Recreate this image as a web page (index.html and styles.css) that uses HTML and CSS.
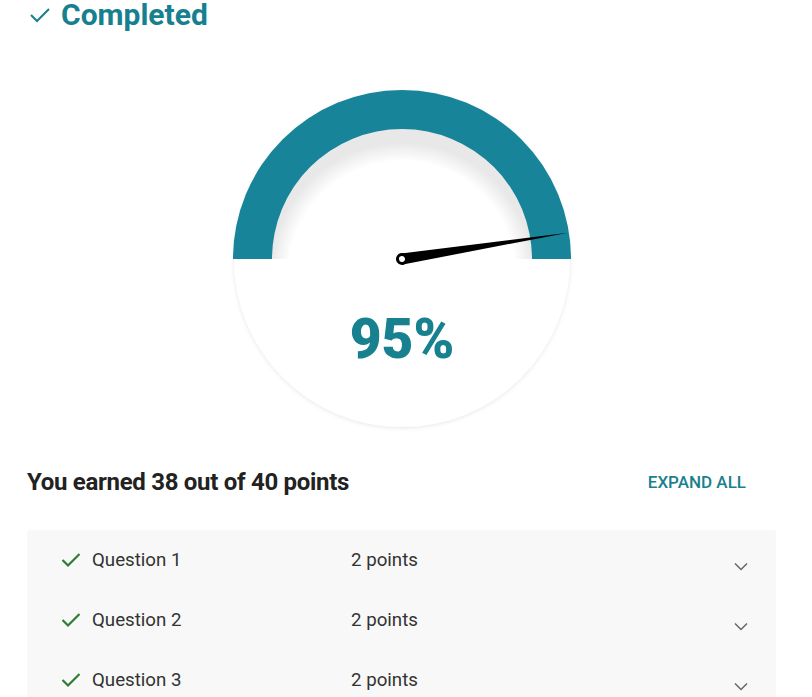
FILE: index.html
```html
<!DOCTYPE html>
<html lang="en">
<head>
    <meta charset="UTF-8">
    <meta name="viewport" content="width=device-width, initial-scale=1.0">
    <title>Quiz Results</title>
    <link rel="stylesheet" href="styles.css">
</head>
<body>
    <div class="page">
        <h1 class="status-title">
            <svg class="status-check" width="22" height="18" viewBox="0 0 22 18">
                <polyline points="2,9 8,15 20,3" fill="none" stroke="#17808f" stroke-width="2"/>
            </svg>
            Completed
        </h1>

        <div class="gauge-wrap">
            <svg class="gauge" width="346" height="346" viewBox="0 0 346 346">
                <defs>
                    <filter id="discShadow" x="-10%" y="-10%" width="120%" height="120%">
                        <feDropShadow dx="0" dy="1" stdDeviation="2" flood-color="#000" flood-opacity="0.10"/>
                    </filter>
                    <radialGradient id="innerShade" cx="50%" cy="56%" r="50%">
                        <stop offset="0.86" stop-color="#000" stop-opacity="0"/>
                        <stop offset="1" stop-color="#000" stop-opacity="0.09"/>
                    </radialGradient>
                    <clipPath id="topHalf">
                        <rect x="0" y="0" width="346" height="173"/>
                    </clipPath>
                </defs>
                <!-- white dial -->
                <circle cx="173" cy="173" r="168" fill="#fff" filter="url(#discShadow)"/>
                <!-- soft shade under the arc -->
                <circle cx="173" cy="173" r="132" fill="url(#innerShade)" clip-path="url(#topHalf)"/>
                <!-- progress arc -->
                <path d="M 4 173 A 169 169 0 0 1 342 173 L 303 173 A 130 130 0 0 0 43 173 Z" fill="#17849a"/>
                <!-- needle -->
                <g transform="translate(173 173) rotate(-9)">
                    <polygon points="0,-5.5 168,0 0,5.5" fill="#000"/>
                    <circle cx="0" cy="0" r="6" fill="#000"/>
                    <circle cx="0" cy="0" r="3" fill="#fff"/>
                </g>
                <text class="gauge-value" x="173" y="272" text-anchor="middle">95%</text>
            </svg>
        </div>

        <div class="score-head">
            <h2 class="score-title">You earned 38 out of 40 points</h2>
            <a class="expand-all" href="#">EXPAND ALL</a>
        </div>

        <div class="questions">
            <div class="question-row">
                <svg class="q-check" width="20" height="16" viewBox="0 0 20 16">
                    <polyline points="1.5,8 7,13.5 18.5,2" fill="none" stroke="#2e7d32" stroke-width="2.2"/>
                </svg>
                <span class="q-name">Question 1</span>
                <span class="q-points">2 points</span>
                <svg class="q-chevron" width="14" height="9" viewBox="0 0 14 9">
                    <polyline points="1,1.5 7,7.5 13,1.5" fill="none" stroke="#666" stroke-width="1.5"/>
                </svg>
            </div>
            <div class="question-row">
                <svg class="q-check" width="20" height="16" viewBox="0 0 20 16">
                    <polyline points="1.5,8 7,13.5 18.5,2" fill="none" stroke="#2e7d32" stroke-width="2.2"/>
                </svg>
                <span class="q-name">Question 2</span>
                <span class="q-points">2 points</span>
                <svg class="q-chevron" width="14" height="9" viewBox="0 0 14 9">
                    <polyline points="1,1.5 7,7.5 13,1.5" fill="none" stroke="#666" stroke-width="1.5"/>
                </svg>
            </div>
            <div class="question-row">
                <svg class="q-check" width="20" height="16" viewBox="0 0 20 16">
                    <polyline points="1.5,8 7,13.5 18.5,2" fill="none" stroke="#2e7d32" stroke-width="2.2"/>
                </svg>
                <span class="q-name">Question 3</span>
                <span class="q-points">2 points</span>
                <svg class="q-chevron" width="14" height="9" viewBox="0 0 14 9">
                    <polyline points="1,1.5 7,7.5 13,1.5" fill="none" stroke="#666" stroke-width="1.5"/>
                </svg>
            </div>
        </div>
    </div>
</body>
</html>
```

FILE: styles.css
```css
body {
    margin: 0;
    background: #fff;
    font-family: Roboto, "Noto Sans", sans-serif;
    color: #222;
    overflow: hidden;
}

.page {
    padding: 0 36px 0 27px;
}

/* Status header */
.status-title {
    display: flex;
    align-items: center;
    gap: 10px;
    margin: -6px 0 0 2px;
    height: 40px;
    font-size: 30px;
    font-weight: 700;
    color: #17808f;
}

.status-check {
    margin-top: 1px;
}

/* Gauge */
.gauge-wrap {
    display: flex;
    justify-content: center;
    margin-top: 52px;
}

.gauge {
    display: block;
}

.gauge-value {
    font-family: Roboto, sans-serif;
    font-size: 55px;
    font-weight: 900;
    fill: #17818f;
}

/* Score heading */
.score-head {
    display: flex;
    justify-content: space-between;
    align-items: center;
    margin-top: 32px;
    height: 36px;
}

.score-title {
    margin: 0;
    font-size: 24px;
    font-weight: 700;
    color: #222;
    letter-spacing: -0.3px;
}

.expand-all {
    margin-right: 30px;
    font-size: 17px;
    font-weight: 500;
    color: #1a7f8e;
    text-decoration: none;
}

/* Question list */
.questions {
    margin-top: 30px;
    background: #f8f8f8;
    border-radius: 3px;
}

.question-row {
    display: flex;
    align-items: center;
    height: 60px;
    padding: 0 28px 0 34px;
    font-size: 18.7px;
    color: #333;
}

.q-check {
    margin-right: 11px;
}

.q-name {
    width: 259px;
}

.q-points {
    flex: 1;
}

.q-chevron {
    margin-top: 12px;
}
```
